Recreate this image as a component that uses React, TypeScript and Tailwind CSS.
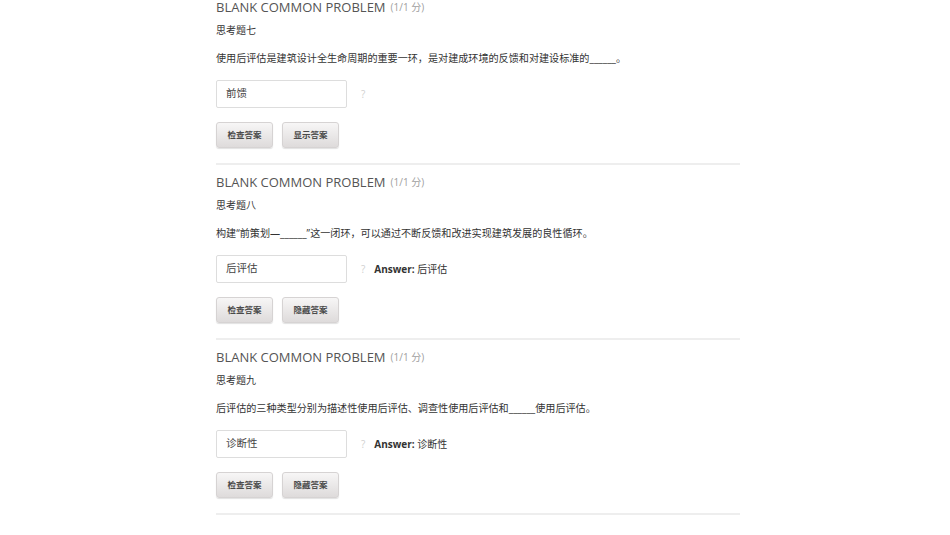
const font = { fontFamily: '"Open Sans", "Noto Sans CJK SC", sans-serif' };

type Problem = {
  name: string;
  question: string;
  value: string;
  answer?: string;
  toggle: string;
};

const problems: Problem[] = [
  {
    name: '思考题七',
    question: '使用后评估是建筑设计全生命周期的重要一环，是对建成环境的反馈和对建设标准的______。',
    value: '前馈',
    toggle: '显示答案',
  },
  {
    name: '思考题八',
    question: '构建“前策划—______”这一闭环，可以通过不断反馈和改进实现建筑发展的良性循环。',
    value: '后评估',
    answer: '后评估',
    toggle: '隐藏答案',
  },
  {
    name: '思考题九',
    question: '后评估的三种类型分别为描述性使用后评估、调查性使用后评估和______使用后评估。',
    value: '诊断性',
    answer: '诊断性',
    toggle: '隐藏答案',
  },
];

const Btn = ({ label }: { label: string }) => (
  <button className="h-[26px] w-[57px] rounded-[3px] border border-[#d6d3d3] bg-gradient-to-b from-[#f7f6f6] to-[#dedbdb] text-[8.5px] font-bold text-[#4a4a4a] shadow-[0_1px_1px_rgba(0,0,0,0.12)]">
    {label}
  </button>
);

const ProblemBlock = ({ p }: { p: Problem }) => (
  <div className="pt-[8px]">
    <div className="flex h-[18px] items-center gap-[5px] leading-none">
      <span className="text-[13px] leading-[14px] text-[#555]">BLANK COMMON PROBLEM</span>
      <span className="text-[10px] leading-[14px] text-[#a0a0a0]">(1/1 分)</span>
    </div>
    <div className="mt-[6px] h-[16px] text-[10px] leading-[16px] text-[#333]">{p.name}</div>
    <div className="mt-[12px] h-[16px] text-[10.1px] leading-[16px] text-[#333]">{p.question}</div>
    <div className="mt-[14px] flex h-[28px] items-center">
      <div className="flex h-[28px] w-[131px] items-center rounded-[2px] border border-[#ddd] bg-white px-[9px] text-[10.5px] text-[#444]">
        {p.value}
      </div>
      <span className="ml-[14px] text-[10px] text-[#d0d0d0]">?</span>
      {p.answer && (
        <span className="ml-[9px] text-[10px] text-[#333]">
          <b className="font-bold">Answer:</b> {p.answer}
        </span>
      )}
    </div>
    <div className="mt-[14px] flex gap-[9px]">
      <Btn label="检查答案" />
      <Btn label={p.toggle} />
    </div>
    <div className="mt-[15px] h-[2px] bg-[#eeeeee]" />
  </div>
);

export default function App() {
  return (
    <div className="h-[535px] w-[950px] overflow-hidden bg-white" style={font}>
      <div className="ml-[216px] mt-[-10px] w-[524px]">
        {problems.map((p) => (
          <ProblemBlock key={p.name} p={p} />
        ))}
      </div>
    </div>
  );
}
